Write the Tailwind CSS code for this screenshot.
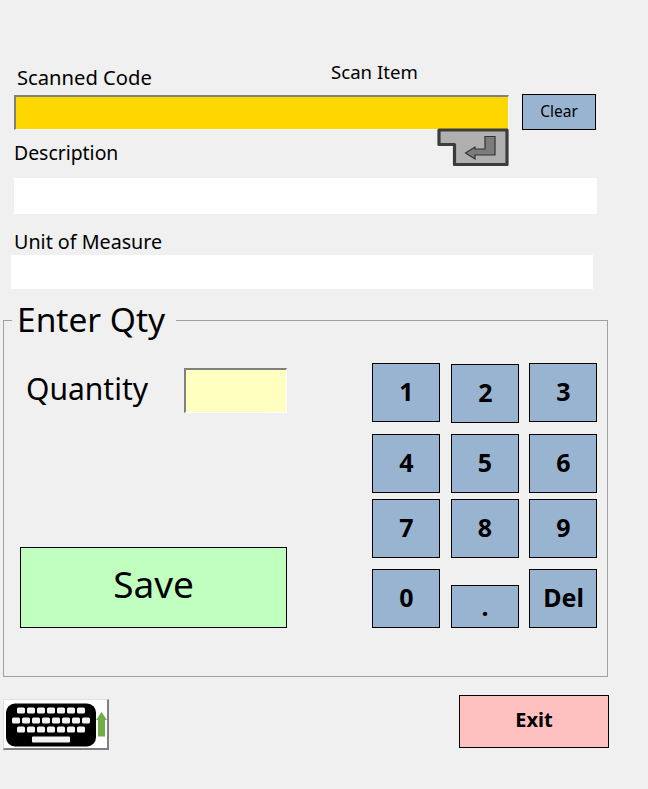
<!DOCTYPE html>
<html lang="en">
<head>
    <meta charset="UTF-8">
    <meta name="viewport" content="width=device-width, initial-scale=1.0">
    <title>Scan Item</title>
    <script src="https://cdn.jsdelivr.net/npm/@tailwindcss/browser@4"></script>
</head>
<body class="bg-[#f0f0f0] text-black font-['Noto_Sans',sans-serif] w-[648px] h-[789px] overflow-hidden">

    <!-- scan section -->
    <div class="relative h-[290px]">
        <div class="flex h-[95px] items-start">
            <label class="ml-[17px] mt-[64px] text-[20.2px] leading-[26px] w-[134px] whitespace-nowrap">Scanned Code</label>
            <span class="ml-[180px] mt-[59px] text-[18.6px] leading-[25px]">Scan Item</span>
        </div>

        <div class="flex items-start">
            <input type="text" class="ml-[14px] w-[495px] h-[35px] bg-[#ffd700] border-2 border-[#808080] border-r-white border-b-white border-r border-b">
            <button class="ml-[13px] -mt-px w-[74px] h-[36px] bg-[#99b4d1] border border-black text-[15.5px]">Clear</button>
        </div>

        <!-- enter key -->
        <svg class="absolute left-[437px] top-[128px]" width="72" height="38" viewBox="0 0 72 38">
            <path d="M2 2H70V36.5H17.5V16.5H2Z" fill="#b0b0b0" stroke="#3c3c3c" stroke-width="3.2" stroke-linejoin="round"/>
            <path d="M48 8.5H58V27H38V31L28.5 25L38 19V21H48Z" fill="#7c7c7c" stroke="#333" stroke-width="1.2"/>
        </svg>

        <label class="block ml-[14px] mt-[10px] text-[19.4px] leading-[26px]">Description</label>
        <div class="ml-[14px] mt-[12px] w-[583px] h-[36px] bg-white"></div>

        <label class="block ml-[14px] mt-[15px] text-[19.7px] leading-[26px]">Unit of Measure</label>
        <div class="ml-[11px] w-[582px] h-[34px] bg-white"></div>
    </div>

    <!-- enter qty group -->
    <fieldset class="ml-[3px] mt-[12px] w-[605px] h-[375px] border border-[#a0a0a0] pl-[8px] pr-[10px] pb-[48px]">
        <legend class="pl-[5px] pr-[11px] h-[36px] text-[33.5px] leading-[34px]">Enter Qty</legend>
        <div class="flex justify-between h-[290px]">
            <div class="flex flex-col justify-between w-[275px] ml-[8px] pt-[30px]">
                <div class="flex items-start">
                    <span class="ml-[6px] text-[30px] leading-[42px] w-[158px]">Quantity</span>
                    <input type="text" class="w-[103px] h-[45px] bg-[#ffffc0] border-2 border-[#808080] border-r-white border-b-white border-r border-b">
                </div>
                <button class="w-[267px] h-[81px] pb-[8px] bg-[#c0ffc0] border border-black text-[37px]">Save</button>
            </div>
            <div class="flex flex-col font-bold text-[25px] w-[225px] pt-[25px]">
                <div class="flex h-[60px] items-start">
                    <button class="w-[68px] h-[59px] pb-[2px] pl-px bg-[#99b4d1] border border-black">1</button>
                    <button class="ml-[11px] mt-px w-[68px] h-[59px] pb-[2px] pl-px bg-[#99b4d1] border border-black">2</button>
                    <button class="ml-[10px] w-[68px] h-[59px] pb-[2px] pl-px bg-[#99b4d1] border border-black">3</button>
                </div>
                <div class="flex mt-[11px] gap-x-[10.5px]">
                    <button class="w-[68px] h-[59px] pb-[2px] pl-px bg-[#99b4d1] border border-black">4</button>
                    <button class="w-[68px] h-[59px] pb-[2px] pl-px bg-[#99b4d1] border border-black">5</button>
                    <button class="w-[68px] h-[59px] pb-[2px] pl-px bg-[#99b4d1] border border-black">6</button>
                </div>
                <div class="flex mt-[6px] gap-x-[10.5px]">
                    <button class="w-[68px] h-[59px] pb-[2px] pl-px bg-[#99b4d1] border border-black">7</button>
                    <button class="w-[68px] h-[59px] pb-[2px] pl-px bg-[#99b4d1] border border-black">8</button>
                    <button class="w-[68px] h-[59px] pb-[2px] pl-px bg-[#99b4d1] border border-black">9</button>
                </div>
                <div class="flex items-end mt-[11px] gap-x-[10.5px]">
                    <button class="w-[68px] h-[59px] pb-[2px] pl-px bg-[#99b4d1] border border-black">0</button>
                    <button class="w-[68px] h-[43px] pl-px bg-[#99b4d1] border border-black">.</button>
                    <button class="w-[68px] h-[59px] pb-[2px] pl-px bg-[#99b4d1] border border-black">Del</button>
                </div>
            </div>
        </div>
    </fieldset>

    <!-- footer -->
    <div class="flex justify-between items-start w-[609px] mt-[18px] ml-[3px] pr-[3px]">
        <button class="mt-[4px] w-[106px] h-[51px] bg-white border border-[#e0e0e0] border-r-2 border-b-2 border-r-[#808080] border-b-[#808080] flex items-center justify-center">
            <svg width="102" height="47" viewBox="0 0.5 102 47">
                <rect x="1" y="3" width="90" height="43" rx="9" fill="#000"/>
                <g fill="#f4f4f4">
                    <rect x="12" y="7" width="8" height="6" rx="1.5"/><rect x="22" y="7" width="8" height="6" rx="1.5"/><rect x="32" y="7" width="8" height="6" rx="1.5"/><rect x="42" y="7" width="8" height="6" rx="1.5"/><rect x="52" y="7" width="8" height="6" rx="1.5"/><rect x="62" y="7" width="8" height="6" rx="1.5"/><rect x="72" y="7" width="8" height="6" rx="1.5"/>
                    <rect x="7" y="17" width="8" height="6" rx="1.5"/><rect x="17" y="17" width="8" height="6" rx="1.5"/><rect x="27" y="17" width="8" height="6" rx="1.5"/><rect x="37" y="17" width="8" height="6" rx="1.5"/><rect x="47" y="17" width="8" height="6" rx="1.5"/><rect x="57" y="17" width="8" height="6" rx="1.5"/><rect x="67" y="17" width="8" height="6" rx="1.5"/><rect x="77" y="17" width="8" height="6" rx="1.5"/>
                    <rect x="12" y="26" width="8" height="6" rx="1.5"/><rect x="22" y="26" width="8" height="6" rx="1.5"/><rect x="32" y="26" width="8" height="6" rx="1.5"/><rect x="42" y="26" width="8" height="6" rx="1.5"/><rect x="52" y="26" width="8" height="6" rx="1.5"/><rect x="62" y="26" width="8" height="6" rx="1.5"/><rect x="72" y="26" width="8" height="6" rx="1.5"/>
                    <rect x="27" y="36" width="38" height="6" rx="1"/>
                </g>
                <path d="M96.5 11.5L102 19.5H100V36H93V19.5H91Z" fill="#70ad47"/>
            </svg>
        </button>
        <button class="w-[150px] h-[53px] pb-[4px] bg-[#ffc0c0] border border-black font-bold text-[20px]">Exit</button>
    </div>

</body>
</html>
